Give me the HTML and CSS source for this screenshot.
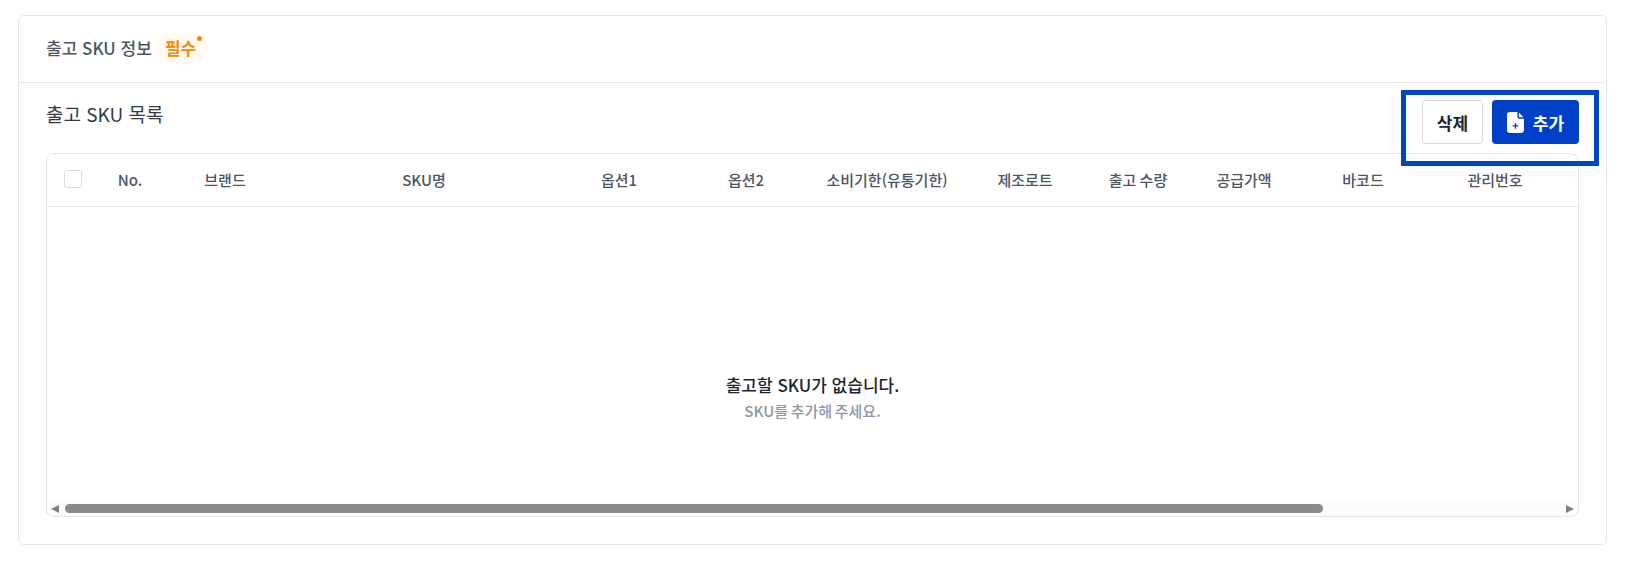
FILE: index.html
```html
<!DOCTYPE html>
<html lang="ko">
<head>
  <meta charset="UTF-8" />
  <title>출고 SKU 정보</title>
  <link rel="stylesheet" href="styles.css">
</head>
<body>
  <section class="card">
    <header class="card-head">
      <h2 class="card-title">출고 SKU 정보</h2>
      <span class="required">필수<i class="dot"></i></span>
    </header>
    <div class="card-body">
      <div class="toolbar">
        <h3 class="list-title">출고 SKU 목록</h3>
        <div class="actions">
          <button class="btn btn-line">삭제</button>
          <button class="btn btn-main">
            <svg class="btn-icon" width="17" height="21" viewBox="0 0 18 22">
              <path d="M3 0h8v5a2 2 0 0 0 2 2h5v12a3 3 0 0 1-3 3H3a3 3 0 0 1-3-3V3a3 3 0 0 1 3-3z" fill="#fff"/>
              <path d="M12.5 0.5l5 5h-4a1 1 0 0 1-1-1z" fill="#fff"/>
              <path d="M9 11.5v6M6 14.5h6" stroke="#0040c9" stroke-width="1.4"/>
            </svg>
            추가
          </button>
        </div>
      </div>
      <div class="table">
        <div class="table-head">
          <div class="cell"><span class="check"></span></div>
          <div class="cell">No.</div>
          <div class="cell">브랜드</div>
          <div class="cell">SKU명</div>
          <div class="cell">옵션1</div>
          <div class="cell">옵션2</div>
          <div class="cell">소비기한(유통기한)</div>
          <div class="cell">제조로트</div>
          <div class="cell">출고 수량</div>
          <div class="cell">공급가액</div>
          <div class="cell">바코드</div>
          <div class="cell">관리번호</div>
        </div>
        <div class="empty">
          <div class="empty-title">출고할 SKU가 없습니다.</div>
          <div class="empty-sub">SKU를 추가해 주세요.</div>
        </div>
        <div class="scrollbar">
          <span class="arrow arrow-left"></span>
          <div class="track"><span class="thumb"></span></div>
          <span class="arrow arrow-right"></span>
        </div>
      </div>
    </div>
  </section>
  <div class="highlight"></div>
</body>
</html>
```

FILE: styles.css
```css
* { box-sizing: border-box; }
body {
  margin: 0;
  padding: 15px 19px 20px 18px;
  background: #fff;
  font-family: "Noto Sans CJK KR", "Noto Sans", sans-serif;
  color: #343a46;
}
.card {
  height: 530px;
  border: 1px solid #e5e7eb;
  border-radius: 6px;
}
.card-head {
  display: flex;
  align-items: center;
  gap: 4px;
  height: 67px;
  padding: 0 27px 3px;
  border-bottom: 1px solid #e5e7eb;
}
.card-title {
  margin: 0;
  font-size: 17px;
  font-weight: 500;
  color: #4b5563;
}
.required {
  position: relative;
  display: flex;
  align-items: center;
  height: 30px;
  padding: 0 12px 0 9px;
  border-radius: 15px;
  background: #fff9f0;
  font-size: 17px;
  font-weight: 700;
  color: #f28a0f;
}
.dot {
  position: absolute;
  top: 3px;
  right: 6px;
  width: 5px;
  height: 5px;
  border-radius: 50%;
  background: #f28a0f;
}
.card-body { padding: 0 27px; }
.toolbar {
  display: flex;
  justify-content: space-between;
  height: 70px;
  padding-top: 17px;
}
.list-title {
  margin: 0;
  font-size: 19px;
  line-height: 28px;
  font-weight: 400;
  color: #343a46;
}
.actions { display: flex; gap: 9px; }
.btn {
  display: flex;
  align-items: center;
  justify-content: center;
  height: 44px;
  border-radius: 4px;
  font-family: inherit;
  font-size: 17px;
  font-weight: 700;
}
.btn-line {
  width: 61px;
  border: 1px solid #d8dade;
  background: #fff;
  color: #1f2430;
}
.btn-main {
  gap: 9px;
  width: 87px;
  border: none;
  background: #0040c9;
  color: #fff;
}
.btn-icon { flex: none; }
.table {
  display: flex;
  flex-direction: column;
  height: 364px;
  border: 1px solid #e2e4e9;
  border-radius: 8px;
}
.table-head {
  display: grid;
  grid-template-columns: 43px 80px 110px 288px 102px 152px 130px 146px 80px 132px 106px 158px;
  height: 53px;
  flex: none;
  border-bottom: 1px solid #e2e4e9;
}
.cell {
  display: flex;
  align-items: center;
  justify-content: center;
  padding-bottom: 2px;
  font-size: 15px;
  font-weight: 500;
  word-spacing: -1px;
  color: #4b5563;
}
.check {
  width: 18px;
  height: 18px;
  margin-left: 9px;
  border: 1px solid #d9dce2;
  border-radius: 2px;
  background: #fff;
}
.empty {
  flex: 1;
  display: flex;
  flex-direction: column;
  align-items: center;
  justify-content: flex-end;
  padding-bottom: 78px;
}
.empty-title {
  margin-bottom: 2px;
  font-size: 17px;
  line-height: 24px;
  font-weight: 500;
  color: #1f2430;
}
.empty-sub {
  font-size: 15px;
  line-height: 24px;
  font-weight: 500;
  word-spacing: -1.5px;
  color: #8c96a6;
}
.scrollbar {
  display: flex;
  align-items: center;
  gap: 6px;
  height: 15px;
  flex: none;
  padding: 0 4px;
  background: #fcfcfd;
  border-radius: 0 0 8px 8px;
}
.track { flex: 1; }
.thumb {
  display: block;
  width: 1258px;
  height: 9px;
  border-radius: 5px;
  background: #8a8a8a;
}
.arrow {
  flex: none;
  width: 0;
  height: 0;
  border-top: 4.5px solid transparent;
  border-bottom: 4.5px solid transparent;
}
.arrow-left { border-right: 8px solid #7f7f7f; }
.arrow-right { border-left: 8px solid #7f7f7f; }
/* 버튼 영역 강조 박스 */
.highlight {
  position: absolute;
  left: 1401px;
  top: 90px;
  width: 198px;
  height: 76px;
  border: 5px solid #0047c4;
}
```
